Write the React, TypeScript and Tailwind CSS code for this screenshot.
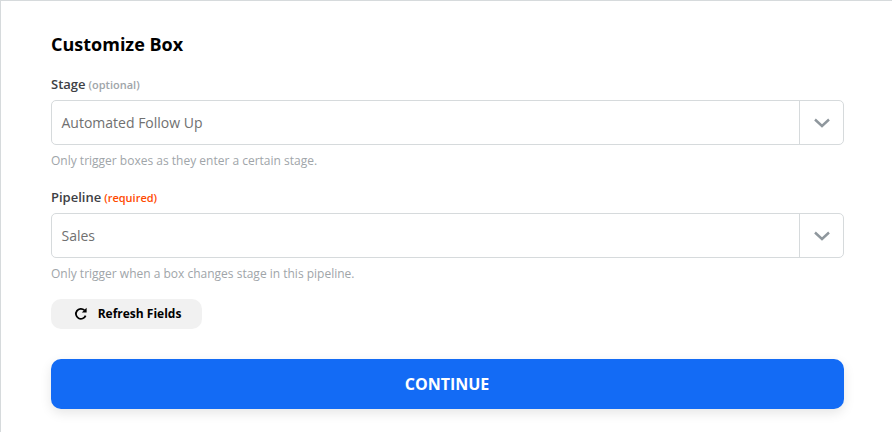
const Chevron = () => (
  <svg width="16" height="10" viewBox="0 0 16 10" fill="none" stroke="#8f979d" strokeWidth="2.4">
    <path d="M1 1.5 L8 8 L15 1.5" />
  </svg>
);

const RefreshIcon = () => (
  <svg width="14" height="14" viewBox="0 0 14 14" fill="none">
    <path d="M11.6 8.6 A5 5 0 1 1 10.4 3.2" stroke="#000000" strokeWidth="1.8" />
    <path d="M12.6 0.8 V5.6 H7.8 Z" fill="#000000" />
  </svg>
);

const SelectField = ({
  label,
  note,
  noteClass,
  value,
  help,
}: {
  label: string;
  note: string;
  noteClass: string;
  value: string;
  help: string;
}) => (
  <div>
    <div className="flex items-baseline gap-[3px] h-[22px] leading-[22px]">
      <span className="text-[13px] font-semibold text-[#3d4044]">{label}</span>
      <span className={`text-[11px] font-semibold ${noteClass}`}>{note}</span>
    </div>
    <div className="mt-[5px] flex h-[45px] rounded-[5px] border border-[#d6dadc] bg-white">
      <div className="flex-1 pl-[9.5px] text-[14px] leading-[44px] text-[#707070]">{value}</div>
      <div className="flex w-[44px] items-center justify-center border-l border-[#d6dadc]">
        <Chevron />
      </div>
    </div>
    <p className="mt-[7px] text-[12px] leading-[18px] text-[#a0a5a9]">{help}</p>
  </div>
);

export default function App() {
  return (
    <div className="h-[432px] w-[892px] overflow-hidden bg-white font-['Open_Sans',sans-serif]">
      <div className="h-full border-t border-l border-[#d6dadc] pl-[50px] pr-[48px] pt-[31px]">
        <h2 className="text-[18px] font-bold leading-[24px] text-black">Customize Box</h2>
        <div className="mt-[17px] flex flex-col gap-[16px]">
          <SelectField
            label="Stage"
            note="(optional)"
            noteClass="text-[#a0a5a9]"
            value="Automated Follow Up"
            help="Only trigger boxes as they enter a certain stage."
          />
          <SelectField
            label="Pipeline"
            note="(required)"
            noteClass="text-[#ff4a00]"
            value="Sales"
            help="Only trigger when a box changes stage in this pipeline."
          />
        </div>
        <button className="mt-[16px] flex h-[30px] w-[151px] items-center justify-center gap-[10px] rounded-[10px] bg-[#f1f1f1] pl-[2px] text-[12px] font-bold text-black">
          <RefreshIcon />
          Refresh Fields
        </button>
        <button className="mt-[30px] block h-[50px] w-[793px] rounded-[10px] bg-[#136bf5] pr-[1px] text-[16px] font-bold text-white shadow-[0_4px_12px_rgba(0,0,0,0.1)]">
          CONTINUE
        </button>
      </div>
    </div>
  );
}
